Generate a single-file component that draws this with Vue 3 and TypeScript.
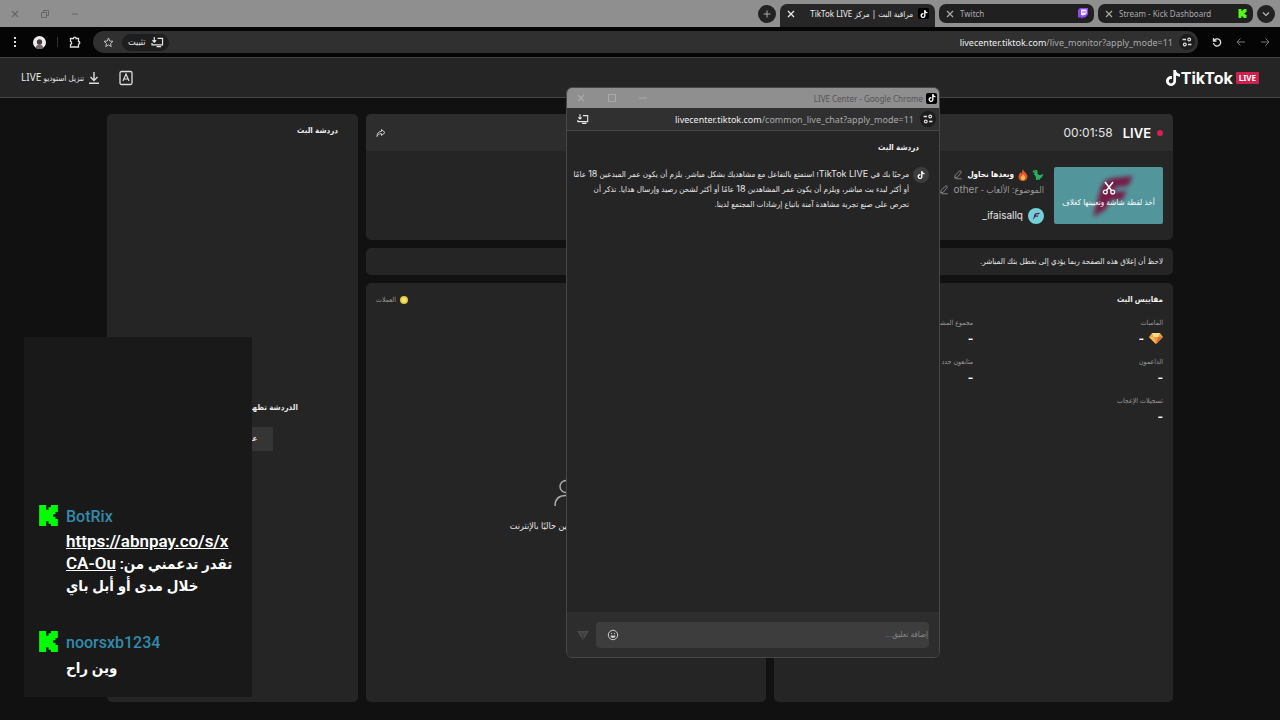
<script setup lang="ts">
import { ref } from 'vue'

interface Metric {
  label: string
  gem?: boolean
}

const comment = ref('')

const metrics: Metric[] = [
  { label: 'الماسات', gem: true },
  { label: 'مجموع المشاهدات' },
  { label: 'الداعمون' },
  { label: 'متابعون جدد' },
  { label: 'تسجيلات الإعجاب' },
]
</script>

<template>
  <svg class="sprite" aria-hidden="true">
    <symbol id="tiktok" viewBox="0 0 24 24">
      <path d="M12.525.02c1.31-.02 2.61-.01 3.91-.02.08 1.53.63 3.09 1.75 4.17 1.12 1.11 2.7 1.62 4.24 1.79v4.03c-1.44-.05-2.89-.35-4.2-.97-.57-.26-1.1-.59-1.62-.93-.01 2.92.01 5.84-.02 8.75-.08 1.4-.54 2.79-1.35 3.94-1.31 1.92-3.58 3.17-5.91 3.21-1.43.08-2.86-.31-4.08-1.03-2.02-1.19-3.44-3.37-3.65-5.71-.02-.5-.03-1-.01-1.49.18-1.9 1.12-3.72 2.58-4.96 1.66-1.44 3.98-2.13 6.15-1.72.02 1.48-.04 2.96-.04 4.44-.99-.32-2.15-.23-3.02.37-.63.41-1.11 1.04-1.36 1.75-.21.51-.15 1.07-.14 1.61.24 1.64 1.82 3.02 3.5 2.87 1.12-.01 2.19-.66 2.77-1.61.19-.33.4-.67.41-1.06.1-1.79.06-3.57.07-5.36.01-4.03-.01-8.05.02-12.07z" fill="#fff" />
    </symbol>
    <symbol id="kick" viewBox="0 0 24 24">
      <path d="M1.333 0h8v5.333H12V2.667h2.667V0h8v8H20v2.667h-2.667v2.666H20V16h2.667v8h-8v-2.667H12v-2.666H9.333V24h-8Z" fill="currentColor" />
    </symbol>
    <symbol id="close" viewBox="0 0 10 10">
      <path d="M2 2l6 6M8 2l-6 6" fill="none" stroke="currentColor" stroke-width="1.2" />
    </symbol>
    <symbol id="install" viewBox="0 0 14 12">
      <path d="M7 1.500h5.500v7H3.500M6 10.500h5M3.500 0v5.500M1.500 3.500l2 2 2-2M1 6.500v2h3" fill="none" stroke="currentColor" stroke-width="1.300" />
    </symbol>
    <symbol id="tune" viewBox="0 0 12 12">
      <path d="M5 3.500H1.500M7 8.500h3.500" stroke="currentColor" stroke-width="1.300" />
      <circle cx="8.200" cy="3.500" r="1.400" fill="none" stroke="currentColor" stroke-width="1.200" />
      <circle cx="3.800" cy="8.500" r="1.400" fill="none" stroke="currentColor" stroke-width="1.200" />
    </symbol>
    <symbol id="pencil" viewBox="0 0 12 12">
      <path d="M3 10.500h7.500M2 9.500l.5-3L7.500 1.500a1.200 1.200 0 0 1 2 2L5 8.800 2 9.500" fill="none" stroke="currentColor" stroke-width="1" />
    </symbol>
  </svg>

  <div class="screen" dir="rtl">
    <div class="tabstrip">
      <button class="round" aria-label="قائمة علامات التبويب">
        <svg width="10" height="10" viewBox="0 0 10 10"><path d="M2 3.500l3 3 3-3" fill="none" stroke="#bbb" stroke-width="1.200" /></svg>
      </button>
      <div class="tab">
        <svg class="fav kickfav" width="9" height="9"><use href="#kick" /></svg>
        <span class="tab-name latin">Stream - Kick Dashboard</span>
        <button class="x" aria-label="إغلاق"><svg width="10" height="10"><use href="#close" /></svg></button>
      </div>
      <div class="tab">
        <svg class="fav" width="10" height="11" viewBox="0 0 20 22">
          <path d="M4 0h16v13l-6 6h-4l-3 3v-3H0V4z" fill="#9146ff" />
          <path d="M6 3h11v8l-3 3h-3l-2 2v-2H6z" fill="#fff" />
          <path d="M10 6v4M14 6v4" stroke="#9146ff" stroke-width="2" />
        </svg>
        <span class="tab-name latin">Twitch</span>
        <button class="x" aria-label="إغلاق"><svg width="10" height="10"><use href="#close" /></svg></button>
      </div>
      <div class="tab active">
        <span class="app-icon"><svg width="8" height="8"><use href="#tiktok" /></svg></span>
        <span class="tab-name">مراقبة البث | مركز TikTok LIVE</span>
        <button class="x" aria-label="إغلاق"><svg width="10" height="10"><use href="#close" /></svg></button>
      </div>
      <button class="round" aria-label="علامة تبويب جديدة">
        <svg width="10" height="10" viewBox="0 0 10 10"><path d="M5 1.500v7M1.500 5h7" stroke="#aaa" /></svg>
      </button>
      <div class="win-controls">
        <button aria-label="تصغير"><svg width="10" height="10" viewBox="0 0 10 10"><path d="M2 5h6" stroke="#666" /></svg></button>
        <button aria-label="استعادة"><svg width="10" height="10" viewBox="0 0 10 10"><path d="M1.500 3.500h5v5h-5zM3.500 3V1.500h5v5H7" fill="none" stroke="#666" /></svg></button>
        <button aria-label="إغلاق"><svg width="10" height="10"><use href="#close" /></svg></button>
      </div>
    </div>

    <div class="toolbar">
      <button class="nav dim" aria-label="السابق"><svg width="10" height="10" viewBox="0 0 10 10"><path d="M1 5h8M5.500 1.500L9 5 5.500 8.500" fill="none" stroke="currentColor" /></svg></button>
      <button class="nav dim" aria-label="التالي"><svg width="10" height="10" viewBox="0 0 10 10"><path d="M9 5H1M4.500 1.500L1 5l3.500 3.500" fill="none" stroke="currentColor" /></svg></button>
      <button class="nav" aria-label="إعادة تحميل"><svg width="10" height="10" viewBox="0 0 10 10"><path d="M1.500 1v3h3M2 3.500a3.600 3.600 0 1 1-.5 2.500" fill="none" stroke="currentColor" stroke-width="1.300" /></svg></button>
      <div class="address">
        <button class="tune" aria-label="معلومات الموقع"><svg width="12" height="12"><use href="#tune" /></svg></button>
        <span class="url" dir="ltr"><b>livecenter.tiktok.com</b>/live_monitor?apply_mode=11</span>
        <button class="install"><svg width="13" height="11"><use href="#install" /></svg><span>تثبيت</span></button>
        <button class="star" aria-label="إشارة مرجعية"><svg width="11" height="11" viewBox="0 0 12 12"><path d="M6 1.200l1.400 3.200 3.500.3-2.700 2.300.8 3.500-3-1.900-3 1.900.8-3.500L1.100 4.700l3.500-.3z" fill="none" stroke="#ccc" /></svg></button>
      </div>
      <button class="ext" aria-label="الإضافات"><svg width="12" height="12" viewBox="0 0 12 12"><path d="M1.500 2.500h3a1.300 1.300 0 0 1 2.600 0h2.400v3a1.300 1.300 0 0 1 0 2.600V11h-8V8.500a1.700 1.700 0 0 0 0-3.200z" fill="none" stroke="#ddd" stroke-width="1.300" /></svg></button>
      <i class="sep"></i>
      <button class="profile" aria-label="الملف الشخصي"><svg width="13" height="13" viewBox="0 0 13 13"><circle cx="6.500" cy="6.500" r="6.500" fill="#eee" /><path d="M3 12c0-3 2-3.500 3.500-3.500S10 9 10 12a6 6 0 0 1-7 0z" fill="#756568" /><circle cx="6.500" cy="6" r="2.700" fill="#4a3b40" /></svg></button>
      <button class="more" aria-label="المزيد"><svg width="4" height="12" viewBox="0 0 4 12"><path d="M1 1h2v2H1zM1 5h2v2H1zM1 9h2v2H1z" fill="#ddd" /></svg></button>
    </div>

    <header class="site">
      <a class="brand" href="#" dir="ltr">
        <svg width="16" height="16"><use href="#tiktok" /></svg>
        <span>TikTok</span><em>LIVE</em>
      </a>
      <div class="site-tools">
        <button aria-label="اللغة"><svg width="14" height="16" viewBox="0 0 14 16"><rect x="1" y="1.500" width="12" height="13" rx="1.500" fill="none" stroke="#ddd" stroke-width="1.300" /><path d="M4 11l3-7 3 7M5 9h4" fill="none" stroke="#ddd" stroke-width="1.200" /></svg></button>
        <a class="download" href="#">
          <svg width="10" height="12" viewBox="0 0 10 12"><path d="M5 0v8M1.500 5L5 8.500 8.500 5M0 11.200h10" fill="none" stroke="#ddd" stroke-width="1.400" /></svg>
          <span>تنزيل استوديو <b>LIVE</b></span>
        </a>
      </div>
    </header>

    <main class="content">
      <div class="primary">
        <section class="stream">
          <div class="stream-head">
            <i class="dot"></i><h1>LIVE</h1><time>00:01:58</time>
            <button class="share" aria-label="مشاركة"><svg width="10" height="10" viewBox="0 0 10 10"><path d="M5.500 1.500L9 4.500 5.500 7.500V5.700C3 5.500 1.500 7 1 8.500 1 5.500 2.500 3.500 5.500 3.300z" fill="none" stroke="#ccc" stroke-linejoin="round" /></svg></button>
          </div>
          <div class="stream-body">
            <button class="cover">
              <svg class="mark" width="50" height="46" viewBox="0 0 50 46"><path d="M5 43L13 13Q16 5 25 4L45 2 40 12 28 13 25 18 39 17 34 26 23 26 17 36z" fill="#741b45" /></svg>
              <svg class="cut" width="14" height="14" viewBox="0 0 14 14"><path d="M3 1l6.500 8.500M11 1L4.500 9.500" stroke="#fff" stroke-width="1.600" /><circle cx="3.300" cy="11" r="1.900" fill="none" stroke="#fff" stroke-width="1.300" /><circle cx="10.700" cy="11" r="1.900" fill="none" stroke="#fff" stroke-width="1.300" /></svg>
              <span>أخذ لقطة شاشة وتعيينها كغلاف</span>
            </button>
            <div class="info">
              <div class="title">
                <svg width="12" height="12" viewBox="0 0 12 12"><path d="M1 1.500L4 .7l1.500 1V5l2 1.300L11.500 5 9.300 9l-1.500.5V11H6.500V9.500L5.300 11H4V8.500L2.800 6H1.500l1-1V3.800L.7 3.300z" fill="#27b45f" /><path d="M2.500 1.500h1v1h-1z" fill="#123" /></svg>
                <svg width="10" height="12" viewBox="0 0 10 12"><path d="M5 0c0 2 3.500 3.500 4.300 6.500C10 10 7.500 12 5 12S0 10.300.6 7C.9 5.500 2 4.700 2 3l1.200 1.500C4.500 3.500 4 1.500 5 0z" fill="#e0572d" /><path d="M5.200 5c.3 1.500 2.300 2 2 4-.2 1.500-1.200 2-2.300 2S2.600 10 2.800 8.500C3 7.300 4.800 6.800 5.200 5z" fill="#f4ba49" /></svg>
                <strong>وبعدها نحاول</strong>
                <button aria-label="تعديل العنوان"><svg width="10" height="10"><use href="#pencil" /></svg></button>
              </div>
              <div class="topic">
                <span>الموضوع: الألعاب - <span class="other">other</span></span>
                <button aria-label="تعديل الموضوع"><svg width="10" height="10"><use href="#pencil" /></svg></button>
              </div>
              <div class="user">
                <svg width="16" height="16" viewBox="0 0 16 16"><circle cx="8" cy="8" r="8" fill="#72d0d8" /><path d="M5 12l1.300-5.500Q7 5 8.500 5L12 4.700l-1 1.500H8.500L8 7.500h2.500l-.8 1.300H7.500z" fill="#5b2350" /></svg>
                <span dir="ltr">_ifaisallq</span>
              </div>
            </div>
          </div>
        </section>

        <p class="notice">لاحظ أن إغلاق هذه الصفحة ربما يؤدي إلى تعطل بثك المباشر.</p>

        <div class="lower">
          <section class="panel">
            <h2>مقاييس البث</h2>
            <dl class="metrics">
              <div v-for="m in metrics" :key="m.label">
                <dt>{{ m.label }}</dt>
                <dd>
                  <svg v-if="m.gem" width="14" height="11" viewBox="0 0 14 11"><path d="M3 0h8l3 4-7 7-7-7z" fill="#e9a13b" /><path d="M3 0h8L9 4H4.500z" fill="#fbdc86" /><path d="M0 4h4.500L7 11z" fill="#f7bf57" /><path d="M9 4h5l-7 7z" fill="#d8713a" /></svg>
                  <span>-</span>
                </dd>
              </div>
            </dl>
          </section>
          <section class="panel viewers">
            <div class="coins">
              <svg width="8" height="8" viewBox="0 0 8 8"><circle cx="4" cy="4" r="4" fill="#e3c43c" /><circle cx="4" cy="4" r="2.500" fill="#f3e276" /></svg>
              <span>العملات</span>
            </div>
            <div class="empty">
              <svg width="26" height="28" viewBox="0 0 26 28"><circle cx="13" cy="7.500" r="6" fill="none" stroke="#aaa" stroke-width="1.500" /><path d="M2 27c0-7 4-10.500 11-10.500S24 20 24 27" fill="none" stroke="#aaa" stroke-width="1.500" /></svg>
              <p>لا يوجد أي مرسلين حاليًا بالإنترنت</p>
            </div>
          </section>
        </div>
      </div>

      <aside class="side">
        <h2>دردشة البث</h2>
        <div class="detached">
          <p>الدردشة تظهر في نافذة منبثقة أخرى</p>
          <button>عرض الدردشة</button>
        </div>
      </aside>
    </main>

    <section class="popup">
      <div class="popup-title">
        <span class="app-icon"><svg width="8" height="8"><use href="#tiktok" /></svg></span>
        <span dir="ltr">LIVE Center - Google Chrome</span>
        <div class="win-controls light">
          <button aria-label="تصغير"><svg width="10" height="10" viewBox="0 0 10 10"><path d="M1 5h8" stroke="#aaa" /></svg></button>
          <button aria-label="تكبير"><svg width="10" height="10" viewBox="0 0 10 10"><path d="M1.500 1.500h7v7h-7z" fill="none" stroke="#aaa" /></svg></button>
          <button aria-label="إغلاق"><svg width="10" height="10"><use href="#close" /></svg></button>
        </div>
      </div>
      <div class="popup-url">
        <button class="tune" aria-label="معلومات الموقع"><svg width="12" height="12"><use href="#tune" /></svg></button>
        <span class="url" dir="ltr"><b>livecenter.tiktok.com</b>/common_live_chat?apply_mode=11</span>
        <button class="install-only" aria-label="تثبيت"><svg width="12" height="11"><use href="#install" /></svg></button>
      </div>
      <div class="popup-body">
        <h2>دردشة البث</h2>
        <div class="message">
          <span class="avatar"><svg width="8" height="8"><use href="#tiktok" /></svg></span>
          <p>مرحبًا بك في <span class="ltr-name">TikTok LIVE</span>! استمتع بالتفاعل مع مشاهديك بشكل مباشر. يلزم أن يكون عمر المبدعين <span class="ltr-name">18</span> عامًا<br>أو أكثر لبدء بث مباشر، ويلزم أن يكون عمر المشاهدين <span class="ltr-name">18</span> عامًا أو أكثر لشحن رصيد وإرسال هدايا. تذكر أن<br>تحرص على صنع تجربة مشاهدة آمنة باتباع إرشادات المجتمع لدينا.</p>
        </div>
      </div>
      <form class="composer" @submit.prevent>
        <div class="field">
          <input v-model="comment" type="text" aria-label="إضافة تعليق" placeholder="إضافة تعليق...">
          <button type="button" aria-label="رموز تعبيرية"><svg width="12" height="12" viewBox="0 0 12 12"><circle cx="6" cy="6" r="4.700" fill="none" stroke="#ccc" /><path d="M3.500 6.500h5a2.500 2.500 0 0 1-5 0zM4 4h1v1H4zM7 4h1v1H7z" fill="#ccc" /></svg></button>
        </div>
        <button type="submit" aria-label="إرسال"><svg width="12" height="10" viewBox="0 0 12 10"><path d="M0 1h12L6 10z" fill="#4b4b4b" /><path d="M3 2.500l3 2 3-2M6 4.500V9" fill="none" stroke="#333" /></svg></button>
      </form>
    </section>

    <section class="overlay" dir="ltr">
      <article>
        <svg width="21" height="21"><use href="#kick" /></svg>
        <div>
          <h3>BotRix</h3>
          <p><a href="#">https://abnpay.co/s/xCA-Ou</a> تقدر تدعمني من: خلال مدى أو أبل باي</p>
        </div>
      </article>
      <article>
        <svg width="21" height="21"><use href="#kick" /></svg>
        <div>
          <h3>noorsxb1234</h3>
          <p>وين راح</p>
        </div>
      </article>
    </section>
  </div>
</template>

<style>
body {
  background: #111;
}
</style>

<style scoped>
* {
  box-sizing: border-box;
  margin: 0;
}
.sprite {
  position: absolute;
  width: 0;
  height: 0;
}
.screen {
  position: relative;
  display: flex;
  flex-direction: column;
  min-height: 100vh;
  overflow: hidden;
  background: #111;
  color: #e6e6e6;
  font: 8px/15px "Liberation Sans", "DejaVu Sans Condensed", "DejaVu Sans", sans-serif;
}
svg {
  display: block;
  flex: none;
}
button {
  display: flex;
  align-items: center;
  justify-content: center;
  flex: none;
  padding: 0;
  border: 0;
  background: none;
  color: inherit;
  font: inherit;
}
a {
  color: inherit;
  text-decoration: none;
}
b {
  font-weight: 400;
}
.tabstrip {
  display: flex;
  align-items: center;
  gap: 4px;
  height: 27px;
  padding: 0 5px 0 10px;
  background: #8f8f8f;
}
.round {
  width: 18px;
  height: 18px;
  border-radius: 9px;
  background: #222;
}
.tab {
  display: flex;
  align-items: center;
  gap: 5px;
  width: 155px;
  height: 19px;
  padding: 0 6px;
  border-radius: 7px;
  background: #202020;
  color: #aaa;
  font-family: "Noto Sans", "DejaVu Sans Condensed", "DejaVu Sans", sans-serif;
}
.tab.active {
  align-self: flex-end;
  height: 23px;
  padding-bottom: 4px;
  border-radius: 7px 7px 0 0;
  background: #262626;
  color: #eee;
}
.tab-name {
  flex: 1;
  overflow: hidden;
  white-space: nowrap;
}
.tab-name.latin {
  text-align: left;
}
.kickfav {
  color: #53fc18;
}
.app-icon {
  display: flex;
  align-items: center;
  justify-content: center;
  flex: none;
  width: 11px;
  height: 11px;
  border-radius: 2px;
  background: #000;
}
.win-controls {
  display: flex;
  gap: 20px;
  margin-right: auto;
  color: #666;
}
.light {
  color: #aaa;
}
.toolbar {
  display: flex;
  align-items: center;
  height: 31px;
  padding: 0 10px 0 13px;
  border-bottom: 1px solid #444;
  background: #050505;
}
.nav {
  margin-left: 14px;
  color: #ddd;
}
.dim {
  color: #777;
}
.address {
  display: flex;
  align-items: center;
  flex: 1;
  height: 22px;
  padding: 0 3px 0 10px;
  border-radius: 11px;
  background: #303030;
}
.tune {
  width: 16px;
  height: 16px;
  border-radius: 8px;
  background: #1c1c1c;
  color: #ddd;
}
.url {
  margin-right: 6px;
  color: #aaa;
  font: 9px/15px "Noto Sans", "DejaVu Sans", sans-serif;
}
.url b {
  color: #eee;
}
.install {
  gap: 5px;
  height: 17px;
  margin-right: auto;
  padding: 0 5px 0 6px;
  border-radius: 9px;
  background: #1e1e1e;
  font-size: 9px;
}
.star {
  margin-right: 8px;
}
.ext {
  margin-right: 12px;
}
.sep {
  width: 1px;
  height: 10px;
  margin: 0 11px;
  background: #333;
}
.more {
  margin-right: 16px;
}
.site {
  display: flex;
  align-items: center;
  justify-content: space-between;
  height: 40px;
  padding: 0 21px;
  border-bottom: 1px solid #444;
  background: #252525;
}
.brand {
  display: flex;
  align-items: center;
  color: #fff;
  font: 700 16px/20px Inter, sans-serif;
}
.brand em {
  margin-left: 3px;
  padding: 0 3px;
  border-radius: 1px;
  background: #d0204f;
  font: 700 8px/12px "Noto Sans", sans-serif;
}
.site-tools,
.download {
  display: flex;
  align-items: center;
}
.site-tools {
  gap: 20px;
}
.download {
  gap: 5px;
}
.download b {
  font: 10px/15px "Noto Sans", sans-serif;
}
.content {
  display: flex;
  flex: 1;
  gap: 8px;
  padding: 16px 107px 18px;
}
.primary {
  display: flex;
  flex: 1;
  flex-direction: column;
  gap: 8px;
}
.stream,
.notice,
.panel,
.side {
  border-radius: 5px;
  background: #252525;
}
.stream {
  overflow: hidden;
}
.stream-head {
  display: flex;
  align-items: center;
  height: 37px;
  padding: 0 10px;
  background: #2d2d2d;
}
.dot {
  width: 6px;
  height: 6px;
  border-radius: 3px;
  background: #d81e53;
}
h1 {
  margin: 0 6px 0 10px;
  color: #fff;
  font: 600 13px/18px Inter, sans-serif;
}
time {
  font: 12px/18px Inter, sans-serif;
}
.share {
  margin-right: auto;
}
.stream-body {
  display: flex;
  gap: 10px;
  padding: 16px 10px;
}
.cover {
  position: relative;
  flex-direction: column;
  width: 109px;
  height: 57px;
  overflow: hidden;
  border-radius: 2px;
  background: #52969b;
  color: #fff;
  white-space: nowrap;
}
.mark {
  position: absolute;
  top: 7px;
  left: 34px;
  filter: blur(2px);
}
.cut,
.cover span {
  position: relative;
}
.title,
.topic,
.user {
  display: flex;
  align-items: center;
  height: 15px;
}
.title {
  gap: 4px;
  color: #fff;
}
.topic {
  gap: 4px;
  color: #999;
  font-size: 9px;
}
.title button {
  color: #999;
}
.other,
.user {
  font: 10px/15px Inter, sans-serif;
}
.user {
  gap: 5px;
  margin-top: 11px;
}
.notice {
  padding: 6px 10px;
}
.lower {
  display: flex;
  flex: 1;
  gap: 8px;
}
.panel {
  flex: 1;
  padding: 9px 10px;
}
h2 {
  color: #eee;
  font: 700 8px/16px "Liberation Sans", "DejaVu Sans Condensed", "DejaVu Sans", sans-serif;
}
.metrics {
  display: grid;
  grid-template-columns: 1fr 1fr;
  row-gap: 8px;
  padding-top: 8px;
}
dt {
  color: #999;
  font-size: 7px;
  line-height: 14px;
}
dd {
  display: flex;
  align-items: center;
  gap: 5px;
  height: 17px;
  color: #fff;
  font: 700 12px/17px Inter, sans-serif;
}
.viewers {
  display: flex;
  flex-direction: column;
}
.coins {
  display: flex;
  align-items: center;
  align-self: flex-end;
  gap: 4px;
  color: #999;
  font-size: 7px;
}
.empty {
  display: flex;
  flex: 1;
  flex-direction: column;
  align-items: center;
  justify-content: center;
  gap: 12px;
  padding-top: 12px;
  font-size: 9px;
}
.side {
  display: flex;
  flex-direction: column;
  width: 251px;
  padding: 9px 20px;
}
.detached {
  display: flex;
  flex: 1;
  flex-direction: column;
  align-items: center;
  justify-content: center;
  gap: 12px;
  padding-top: 18px;
  font-weight: 700;
}
.detached button {
  height: 24px;
  padding: 0 16px;
  background: #353535;
}
.popup {
  position: absolute;
  top: 87px;
  left: 566px;
  display: flex;
  flex-direction: column;
  width: 374px;
  height: 571px;
  overflow: hidden;
  border: 1px solid #474747;
  border-radius: 6px;
  background: #252525;
}
.popup-title {
  display: flex;
  align-items: center;
  gap: 3px;
  height: 20px;
  padding: 0 2px 0 9px;
  background: #8f8f8f;
  color: #555;
  font-family: "Noto Sans", sans-serif;
}
.popup-title .win-controls {
  gap: 21px;
}
.popup-url {
  display: flex;
  align-items: center;
  height: 23px;
  padding: 0 3px 0 10px;
  border-bottom: 1px solid #484848;
  background: #303030;
}
.install-only {
  margin-right: auto;
}
.popup-body {
  flex: 1;
  padding: 9px 10px;
}
.popup-body h2 {
  padding-right: 10px;
}
.message {
  display: flex;
  gap: 4px;
  margin-top: 11px;
}
.message p {
  white-space: nowrap;
}
.avatar {
  display: flex;
  align-items: center;
  justify-content: center;
  flex: none;
  width: 16px;
  height: 16px;
  border-radius: 8px;
  background: #3d3d3d;
}
.ltr-name {
  font: 9px/9px Inter, sans-serif;
}
.composer {
  display: flex;
  align-items: center;
  gap: 7px;
  height: 45px;
  padding: 0 10px;
  background: #2d2d2d;
}
.field {
  display: flex;
  align-items: center;
  flex: 1;
  height: 26px;
  padding-left: 11px;
  border-radius: 4px;
  background: #3d3d3d;
}
.field input {
  flex: 1;
  min-width: 0;
  padding: 0 1px;
  border: 0;
  outline: 0;
  background: none;
  color: #eee;
  font: inherit;
}
.field input::placeholder {
  color: #888;
  opacity: 1;
}
.overlay {
  position: absolute;
  top: 337px;
  left: 24px;
  display: flex;
  flex-direction: column;
  justify-content: flex-end;
  gap: 34px;
  width: 228px;
  height: 360px;
  padding: 0 15px 18px 14px;
  background: #191919;
  color: #fff;
  font: 600 15px/22px Roboto, "DejaVu Sans Condensed", "DejaVu Sans", sans-serif;
}
.overlay article {
  display: flex;
  gap: 7px;
}
.overlay svg {
  color: #0f0;
}
.overlay h3 {
  padding: 1px 0 3px;
  color: #328bab;
  font: 500 16px/22px Roboto, sans-serif;
}
.overlay a {
  font-size: 17px;
  line-height: 17px;
  text-decoration: underline;
  word-break: break-all;
}
</style>
